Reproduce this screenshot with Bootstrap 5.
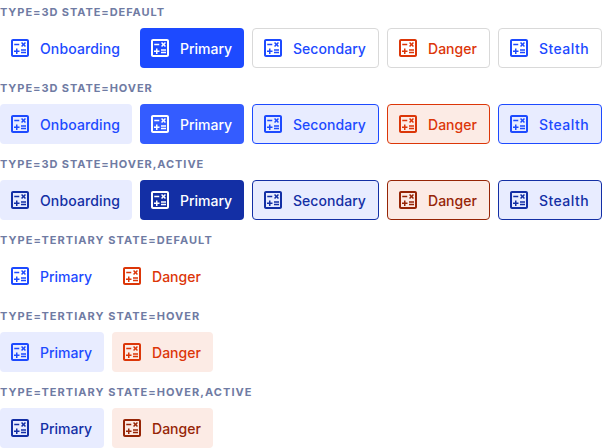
<!DOCTYPE html>
<html lang="en">
<head>
<meta charset="utf-8">
<meta name="viewport" content="width=device-width, initial-scale=1">
<title>Button states</title>
<link href="https://cdn.jsdelivr.net/npm/bootstrap@5.3.0/dist/css/bootstrap.min.css" rel="stylesheet">
<style>
  body { font-family: Inter, sans-serif; background: #fff; overflow: hidden; }
  .state-title { font-size: 11px; line-height: 16px; font-weight: 700; letter-spacing: .93px; color: #6f7ba3; padding: 4px 0 8px; }
  .tertiary .state-title { letter-spacing: 1.04px; }
  .state-group { height: 76px; }
  .state-group:last-child { height: 68px; }
  .action {
    --bs-btn-padding-x: 0; --bs-btn-padding-y: 0;
    --bs-btn-font-size: 14px; --bs-btn-font-weight: 500; --bs-btn-line-height: 24px;
    --bs-btn-border-radius: 4px; --bs-btn-border-width: 0;
    height: 40px; padding: 0 12px 0 8px; white-space: nowrap;
  }
  .action svg { width: 24px; height: 24px; fill: currentColor; flex: none; }
  .action span { padding-top: 2px; text-align: left; }
  .w-onboarding { width: 80px; letter-spacing: .12px; }
  .w-primary { width: 52px; letter-spacing: -.02px; }
  .w-secondary { width: 73px; letter-spacing: .05px; }
  .w-danger { width: 49px; letter-spacing: .03px; }
  .w-stealth { width: 50px; letter-spacing: .44px; }
  .outlined { --bs-btn-border-width: 1px; --bs-btn-border-color: #d9d9d9; }
  .blue { --bs-btn-color: #1d4aff; }
  .red { --bs-btn-color: #dc3608; }
  .solid { --bs-btn-color: #fff; --bs-btn-bg: #1d4aff; }
  .is-hover.blue, .is-pressed.blue { --bs-btn-bg: #e8ecff; --bs-btn-border-color: #1d4aff; }
  .is-hover.red, .is-pressed.red { --bs-btn-bg: #fcebe5; --bs-btn-border-color: #dc3608; }
  .is-hover.solid { --bs-btn-bg: #345cff; }
  .is-pressed.blue { --bs-btn-color: #132fa5; --bs-btn-border-color: #132fa5; }
  .is-pressed.red { --bs-btn-color: #962506; --bs-btn-border-color: #962506; }
  .is-pressed.solid { --bs-btn-bg: #132fa5; }
</style>
</head>
<body>
<svg class="d-none">
  <symbol id="calculate" viewBox="0 0 24 24">
    <path d="M19 3H5c-1.1 0-2 .9-2 2v14c0 1.1.9 2 2 2h14c1.1 0 2-.9 2-2V5c0-1.1-.9-2-2-2zm0 16H5V5h14v14z"/>
    <path d="M6.25 7.72h5v1.5h-5zM13 15.75h5v1.5h-5zM13 13.25h5v1.5h-5zM8 18h1.5v-2h2v-1.5h-2v-2H8v2H6V16h2z"/>
    <path d="M14.09 10.95l1.41-1.41 1.41 1.41 1.06-1.06-1.41-1.42 1.41-1.41L16.91 6 15.5 7.41 14.09 6l-1.06 1.06 1.41 1.41-1.41 1.42z"/>
  </symbol>
</svg>
<main>
  <section class="state-group">
    <h2 class="state-title m-0 text-uppercase">type=3d state=default</h2>
    <div class="d-flex gap-2">
      <button type="button" class="btn action blue d-flex align-items-center gap-2"><svg><use href="#calculate"/></svg><span class="w-onboarding">Onboarding</span></button>
      <button type="button" class="btn action solid d-flex align-items-center gap-2"><svg><use href="#calculate"/></svg><span class="w-primary">Primary</span></button>
      <button type="button" class="btn action outlined blue d-flex align-items-center gap-2"><svg><use href="#calculate"/></svg><span class="w-secondary">Secondary</span></button>
      <button type="button" class="btn action outlined red d-flex align-items-center gap-2"><svg><use href="#calculate"/></svg><span class="w-danger">Danger</span></button>
      <button type="button" class="btn action outlined blue d-flex align-items-center gap-2"><svg><use href="#calculate"/></svg><span class="w-stealth">Stealth</span></button>
    </div>
  </section>
  <section class="state-group">
    <h2 class="state-title m-0 text-uppercase">type=3d state=hover</h2>
    <div class="d-flex gap-2">
      <button type="button" class="btn action blue is-hover d-flex align-items-center gap-2"><svg><use href="#calculate"/></svg><span class="w-onboarding">Onboarding</span></button>
      <button type="button" class="btn action solid is-hover d-flex align-items-center gap-2"><svg><use href="#calculate"/></svg><span class="w-primary">Primary</span></button>
      <button type="button" class="btn action outlined blue is-hover d-flex align-items-center gap-2"><svg><use href="#calculate"/></svg><span class="w-secondary">Secondary</span></button>
      <button type="button" class="btn action outlined red is-hover d-flex align-items-center gap-2"><svg><use href="#calculate"/></svg><span class="w-danger">Danger</span></button>
      <button type="button" class="btn action outlined blue is-hover d-flex align-items-center gap-2"><svg><use href="#calculate"/></svg><span class="w-stealth">Stealth</span></button>
    </div>
  </section>
  <section class="state-group">
    <h2 class="state-title m-0 text-uppercase">type=3d state=hover,active</h2>
    <div class="d-flex gap-2">
      <button type="button" class="btn action blue is-pressed d-flex align-items-center gap-2"><svg><use href="#calculate"/></svg><span class="w-onboarding">Onboarding</span></button>
      <button type="button" class="btn action solid is-pressed d-flex align-items-center gap-2"><svg><use href="#calculate"/></svg><span class="w-primary">Primary</span></button>
      <button type="button" class="btn action outlined blue is-pressed d-flex align-items-center gap-2"><svg><use href="#calculate"/></svg><span class="w-secondary">Secondary</span></button>
      <button type="button" class="btn action outlined red is-pressed d-flex align-items-center gap-2"><svg><use href="#calculate"/></svg><span class="w-danger">Danger</span></button>
      <button type="button" class="btn action outlined blue is-pressed d-flex align-items-center gap-2"><svg><use href="#calculate"/></svg><span class="w-stealth">Stealth</span></button>
    </div>
  </section>
  <section class="state-group tertiary">
    <h2 class="state-title m-0 text-uppercase">type=tertiary state=default</h2>
    <div class="d-flex gap-2">
      <button type="button" class="btn action blue d-flex align-items-center gap-2"><svg><use href="#calculate"/></svg><span class="w-primary">Primary</span></button>
      <button type="button" class="btn action red d-flex align-items-center gap-2"><svg><use href="#calculate"/></svg><span class="w-danger">Danger</span></button>
    </div>
  </section>
  <section class="state-group tertiary">
    <h2 class="state-title m-0 text-uppercase">type=tertiary state=hover</h2>
    <div class="d-flex gap-2">
      <button type="button" class="btn action blue is-hover d-flex align-items-center gap-2"><svg><use href="#calculate"/></svg><span class="w-primary">Primary</span></button>
      <button type="button" class="btn action red is-hover d-flex align-items-center gap-2"><svg><use href="#calculate"/></svg><span class="w-danger">Danger</span></button>
    </div>
  </section>
  <section class="state-group tertiary">
    <h2 class="state-title m-0 text-uppercase">type=tertiary state=hover,active</h2>
    <div class="d-flex gap-2">
      <button type="button" class="btn action blue is-pressed d-flex align-items-center gap-2"><svg><use href="#calculate"/></svg><span class="w-primary">Primary</span></button>
      <button type="button" class="btn action red is-pressed d-flex align-items-center gap-2"><svg><use href="#calculate"/></svg><span class="w-danger">Danger</span></button>
    </div>
  </section>
</main>
<script src="https://cdn.jsdelivr.net/npm/bootstrap@5.3.0/dist/js/bootstrap.bundle.min.js"></script>
</body>
</html>
